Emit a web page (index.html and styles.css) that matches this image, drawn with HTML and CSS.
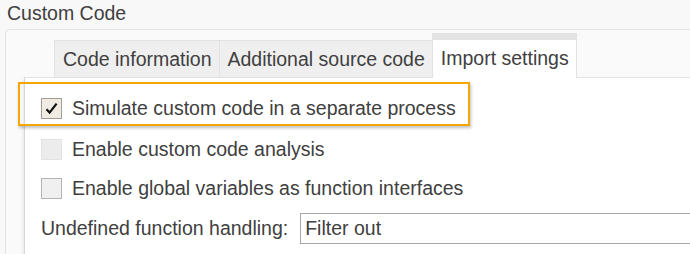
FILE: index.html
```html
<!DOCTYPE html>
<html>
<head>
<meta charset="utf-8">
<link rel="stylesheet" href="styles.css">
</head>
<body>
<div class="title">Custom Code</div>
<div class="panel">
  <div class="tabs">
    <div class="tab">Code information</div>
    <div class="tab">Additional source code</div>
    <div class="tab active">Import settings</div>
  </div>
  <div class="content">
    <div class="row highlight">
      <span class="cb checked"><svg width="13" height="13" viewBox="0 0 13 13"><path d="M1.5 7.2 L4.6 10.6 L11.6 1.6" fill="none" stroke="#111" stroke-width="2.2" stroke-linejoin="miter"/></svg></span>
      <span class="label">Simulate custom code in a separate process</span>
    </div>
    <div class="row r2">
      <span class="cb disabled"></span>
      <span class="label">Enable custom code analysis</span>
    </div>
    <div class="row r3">
      <span class="cb"></span>
      <span class="label">Enable global variables as function interfaces</span>
    </div>
    <div class="row r4">
      <span class="label plain">Undefined function handling:</span>
      <div class="field">Filter out</div>
    </div>
  </div>
</div>
</body>
</html>
```
FILE: styles.css
```css
html, body {
  margin: 0;
  padding: 0;
  background: #f8f8f8;
  font-family: "Liberation Sans", Arial, sans-serif;
  color: #404040;
  overflow: hidden;
  height: 254px;
}
.title {
  height: 29px;
  padding-left: 7px;
  font-size: 19.5px;
  line-height: 26px;
}
.panel {
  box-sizing: border-box;
  margin-left: 5px;
  height: 225px;
  border: 1px solid #e3e3e3;
  border-right: none;
  border-bottom: none;
  border-top-left-radius: 5px;
  background: #fafafa;
  padding-top: 3px;
}
.tabs {
  display: flex;
  align-items: flex-end;
  margin-left: 48px;
  position: relative;
  z-index: 1;
  margin-bottom: -1px;
}
.tab {
  box-sizing: border-box;
  height: 38px;
  padding: 0 7px 0 8px;
  background: #efefef;
  border: 1px solid #e2e2e2;
  border-right: none;
  font-size: 19.5px;
  line-height: 36px;
}
.tab.active {
  height: 45px;
  background: #ffffff;
  border-top: 7px solid #e3e3e3;
  border-right: 1px solid #e2e2e2;
  border-bottom: none;
  line-height: 37px;
}
.content {
  margin-left: 18px;
  height: 180px;
  background: #ffffff;
  border-top: 1px solid #e3e3e3;
  border-left: 1px solid #d6d6d6;
  box-shadow: -3px 0 3px -2px rgba(0,0,0,0.08);
  padding-top: 4px;
  padding-left: 16px;
}
.row {
  display: flex;
  align-items: center;
  font-size: 19.5px;
}
.highlight {
  box-sizing: border-box;
  margin-left: -23px;
  width: 452px;
  height: 44px;
  padding-left: 21px;
  padding-top: 8px;
  border: 2px solid #f5a700;
  box-shadow: 1px 2px 3px rgba(0,0,0,0.25);
}
.r2 { height: 42px; margin-top: 2px; }
.r3 { height: 36px; }
.r4 { height: 44px; margin-left: 0; }
.cb {
  box-sizing: border-box;
  width: 21px;
  height: 21px;
  border: 1px solid #b4b4b4;
  background: #f0f0f0;
  margin-right: 10px;
  display: flex;
  align-items: center;
  justify-content: center;
  flex: none;
}
.cb.checked {
  background: #f0ebe3;
  border-color: #a59d94;
}
.cb.disabled {
  background: #ececec;
  border-color: #e2e2e2;
}
.label {
  white-space: nowrap;
}
.plain {
  margin-right: 12px;
}
.field {
  box-sizing: border-box;
  height: 31px;
  flex: 1;
  background: #fff;
  border: 1px solid #a8a8a8;
  border-right: none;
  padding-left: 4px;
  line-height: 29px;
}
```
